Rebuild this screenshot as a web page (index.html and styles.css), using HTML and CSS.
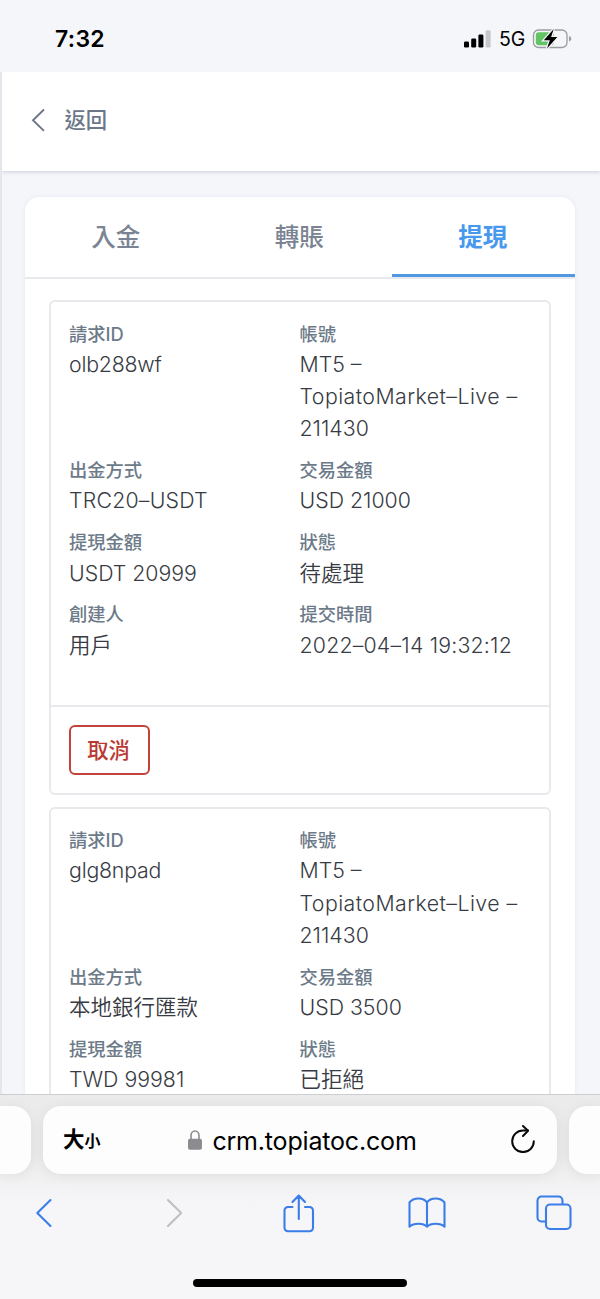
FILE: index.html
```html
<!DOCTYPE html>
<html lang="zh-Hant">
<head>
    <meta charset="UTF-8">
    <meta name="viewport" content="width=device-width, initial-scale=1.0">
    <title>提現</title>
    <link rel="stylesheet" href="styles.css">
</head>
<body>
    <div class="statusbar">
        <div class="time">7:32</div>
        <div class="status-icons">
            <svg class="signal" width="27" height="18" viewBox="0 0 27 18">
                <rect x="0" y="11.5" width="5" height="6" rx="1.3"/>
                <rect x="7.2" y="8.5" width="5" height="9" rx="1.3"/>
                <rect x="14.4" y="4.5" width="5" height="13" rx="1.3"/>
                <rect x="21.6" y="0.3" width="5" height="17.2" rx="1.3" fill="#c6c7ca"/>
            </svg>
            <span class="network">5G</span>
            <svg class="battery" width="40" height="22" viewBox="0 0 40 22">
                <rect x="1.5" y="2" width="33.5" height="17.5" rx="5" fill="none" stroke="#9b9c9f" stroke-width="1.3"/>
                <rect x="3.8" y="4.3" width="18" height="13" rx="3" fill="#63c466"/>
                <path d="M37 8v5.500c1.600-.6 2.300-1.600 2.300-2.700s-.7-2.200-2.300-2.800z" fill="#9b9c9f"/>
                <path d="M21.700 1L11.800 12.300h6L15 20.500 25.300 9h-6.200z" stroke="#f5f6fa" stroke-width="2.500" paint-order="stroke"/>
            </svg>
        </div>
    </div>

    <div class="page">
        <header class="header">
            <svg width="14" height="24" viewBox="0 0 14 24" fill="none" stroke="#6c7789" stroke-width="1.9">
                <path d="M13 1.500L2 12.200 13 22.900"/>
            </svg>
            <span>返回</span>
        </header>

        <main class="card">
            <nav class="tabs">
                <div class="tab">入金</div>
                <div class="tab">轉賬</div>
                <div class="tab active">提現</div>
            </nav>

            <div class="records">
                <section class="record">
                    <div class="fields">
                        <div class="field">
                            <div class="label">請求ID</div>
                            <div class="value id">olb288wf</div>
                        </div>
                        <div class="field">
                            <div class="label">帳號</div>
                            <div class="value">MT5 –<br><span class="server">TopiatoMarket–Live –</span><br>211430</div>
                        </div>
                        <div class="field">
                            <div class="label">出金方式</div>
                            <div class="value wide">TRC20–USDT</div>
                        </div>
                        <div class="field">
                            <div class="label">交易金額</div>
                            <div class="value">USD 21000</div>
                        </div>
                        <div class="field">
                            <div class="label">提現金額</div>
                            <div class="value">USDT 20999</div>
                        </div>
                        <div class="field">
                            <div class="label">狀態</div>
                            <div class="value zh">待處理</div>
                        </div>
                        <div class="field">
                            <div class="label">創建人</div>
                            <div class="value zh">用戶</div>
                        </div>
                        <div class="field">
                            <div class="label">提交時間</div>
                            <div class="value wide">2022–04–14 19:32:12</div>
                        </div>
                    </div>
                    <div class="actions">
                        <button class="cancel">取消</button>
                    </div>
                </section>

                <section class="record">
                    <div class="fields">
                        <div class="field">
                            <div class="label">請求ID</div>
                            <div class="value id">glg8npad</div>
                        </div>
                        <div class="field">
                            <div class="label">帳號</div>
                            <div class="value">MT5 –<br><span class="server">TopiatoMarket–Live –</span><br>211430</div>
                        </div>
                        <div class="field">
                            <div class="label">出金方式</div>
                            <div class="value zh">本地銀行匯款</div>
                        </div>
                        <div class="field">
                            <div class="label">交易金額</div>
                            <div class="value">USD 3500</div>
                        </div>
                        <div class="field">
                            <div class="label">提現金額</div>
                            <div class="value">TWD 99981</div>
                        </div>
                        <div class="field">
                            <div class="label">狀態</div>
                            <div class="value zh">已拒絕</div>
                        </div>
                    </div>
                </section>
            </div>
        </main>
    </div>

    <footer class="browser">
        <div class="address-row">
            <div class="side-tab left"></div>
            <div class="address">
                <div class="text-size"><span class="big">大</span><span class="small">小</span></div>
                <div class="url">
                    <svg width="14" height="20" viewBox="0 0 14 20">
                        <path d="M3 10V5.500a4 4.500 0 0 1 8 0V10" fill="none" stroke="#8b8b90" stroke-width="1.600"/>
                        <rect x="0" y="8.800" width="14" height="11" rx="2" fill="#8b8b90"/>
                    </svg>
                    <span>crm.topiatoc.com</span>
                </div>
                <svg class="reload" width="24" height="28" viewBox="0 0 24 28" fill="none" stroke="#0a0a0a" stroke-width="2" stroke-linecap="round" stroke-linejoin="round">
                    <path d="M22.800 16.300A10.800 10.800 0 1 1 12 5.500h5"/>
                    <path d="M12 1L17 5.700 12 11"/>
                </svg>
            </div>
            <div class="side-tab right"></div>
        </div>
        <div class="toolbar">
            <svg width="38" height="30" viewBox="0 0 18 30">
                <path d="M15.500 2L2.300 15l13.200 13"/>
            </svg>
            <svg class="disabled" width="38" height="30" viewBox="0 0 18 30">
                <path d="M2 2l13.200 13L2 28"/>
            </svg>
            <svg width="38" height="40" viewBox="0 0 32 40">
                <path d="M9.500 14H5a3.500 3.500 0 0 0-3.500 3.500v17.300A3.500 3.500 0 0 0 5 38.300h21.500a3.500 3.500 0 0 0 3.500-3.500V17.500a3.500 3.500 0 0 0-3.500-3.500H22M15.800 26V3M9.500 9l6.300-6.500L22 9"/>
            </svg>
            <svg width="38" height="32" viewBox="0 0 38 32">
                <path d="M19 5.500C15.500.2 5.500.2 1.500 5.500v24.200c4-4 14-4 17.500 0 3.500-4 13.500-4 17.500 0V5.500C32.500.2 22.500.2 19 5.500zM19 5.500v24.200"/>
            </svg>
            <svg width="38" height="36" viewBox="0 0 36 36">
                <rect x="10" y="9.500" width="24.500" height="24.500" rx="4"/>
                <path d="M9.500 26.500H5.500a4 4 0 0 1-4-4v-17a4 4 0 0 1 4-4h17a4 4 0 0 1 4 4V9"/>
            </svg>
        </div>
        <div class="home-bar"></div>
    </footer>
</body>
</html>
```
FILE: styles.css
```css
* {
    box-sizing: border-box;
}
body {
    margin: 0;
    height: 1299px;
    display: flex;
    flex-direction: column;
    overflow: hidden;
    background: #f5f6fa;
    font-family: Inter, "Noto Sans CJK TC", sans-serif;
}

/* status bar */
.statusbar {
    flex: none;
    height: 72px;
    padding: 5px 28px 0 55px;
    display: flex;
    justify-content: space-between;
    align-items: center;
    color: #000;
}
.time {
    font-size: 23px;
    font-weight: 600;
    letter-spacing: 0.3px;
}
.status-icons {
    display: flex;
    align-items: center;
}
.network {
    width: 25px;
    margin: 0 8px;
    font-size: 19.5px;
    font-weight: 400;
    line-height: 20px;
    white-space: nowrap;
}

/* page */
.page {
    flex: none;
    height: 1022px;
    overflow: hidden;
    border-left: 2px solid #e4e6eb;
}
.header {
    height: 99px;
    padding: 0 29px 3px;
    display: flex;
    align-items: center;
    gap: 19.5px;
    background: #fff;
    box-shadow: 0 1px 4px rgba(60, 70, 100, 0.22);
    color: #6c7789;
    font-size: 21.3px;
    font-weight: 500;
}
.header span {
    margin-top: -3px;
}
.card {
    margin: 26px 25px 0 22.500px;
    min-height: 900px;
    background: #fff;
    border-radius: 14px;
    box-shadow: 0 0 4px rgba(60, 70, 100, 0.08);
}
.tabs {
    height: 82px;
    display: flex;
    border-bottom: 2px solid #e7e9ec;
}
.tab {
    flex: 1;
    height: 80px;
    padding: 0 1px 4px 0;
    display: flex;
    justify-content: center;
    align-items: center;
    font-size: 24.5px;
    font-weight: 500;
    color: #7a8492;
}
.tab.active {
    color: #4799ee;
    font-weight: 700;
    border-bottom: 3px solid #5297e1;
    padding-bottom: 1px;
}
.records {
    padding: 21px 24px;
    display: flex;
    flex-direction: column;
    gap: 12px;
}
.record {
    border: 2px solid #e7e9ec;
    border-radius: 6px;
}
.fields {
    display: grid;
    grid-template-columns: 230.500px 1fr;
    row-gap: 12.6px;
    padding: 18.500px 0 43.500px 18.500px;
}
.label {
    height: 27.4px;
    line-height: 27.4px;
    font-size: 18.3px;
    font-weight: 500;
    color: #6c7a89;
}
.value {
    min-height: 32.2px;
    line-height: 32.2px;
    font-size: 21.3px;
    font-weight: 350;
    color: #383b43;
    white-space: nowrap;
}
.value.id {
    letter-spacing: -0.2px;
}
.value.wide {
    letter-spacing: 0.2px;
}
.server {
    letter-spacing: 0.45px;
}
.value.zh {
    height: 32.2px;
    font-size: 21.5px;
}
.actions {
    padding: 18px;
    border-top: 2px solid #e7e9ec;
}
.cancel {
    display: block;
    width: 81px;
    height: 50px;
    padding: 0 1px 3px 0;
    border: 2px solid #c4423c;
    border-radius: 6px;
    background: #fff;
    color: #b93a32;
    font-family: inherit;
    font-size: 21.3px;
    font-weight: 500;
}

/* browser chrome */
.browser {
    flex: none;
    height: 205px;
    padding-top: 11px;
    border-top: 1px solid #cdced0;
    background: linear-gradient(#ebebec 0, #ececed 60px, #f6f6f8 110px);
    overflow: hidden;
}
.address-row {
    display: flex;
    gap: 12px;
    height: 68px;
}
.side-tab,
.address {
    background: #fdfdfd;
    box-shadow: 0 2px 14px rgba(0, 0, 0, 0.07);
}
.side-tab {
    width: 31px;
}
.side-tab.left {
    border-radius: 0 18px 18px 0;
}
.side-tab.right {
    border-radius: 18px 0 0 18px;
}
.address {
    flex: 1;
    display: flex;
    justify-content: space-between;
    align-items: center;
    padding: 0 22px 0 20px;
    border-radius: 18px;
    color: #000;
}
.text-size {
    width: 40px;
    display: flex;
    align-items: baseline;
    font-weight: 700;
    line-height: 28px;
}
.big {
    font-size: 21.5px;
}
.small {
    font-size: 16px;
}
.url {
    display: flex;
    align-items: center;
    gap: 10px;
    margin-right: 9px;
    padding-top: 2px;
    font-size: 25px;
    letter-spacing: -0.18px;
}
.url svg {
    margin-top: -2px;
}
.reload {
    margin-top: -3px;
}
.toolbar {
    height: 76px;
    padding: 1px 27px 0 25px;
    display: flex;
    justify-content: space-between;
    align-items: center;
}
.toolbar svg {
    fill: none;
    stroke: #3b7de9;
    stroke-width: 2.1;
    stroke-linecap: round;
    stroke-linejoin: round;
}
.toolbar .disabled {
    margin: 0 -3px 0 3px;
    stroke: #bfbfc2;
}
.home-bar {
    width: 214px;
    height: 8px;
    margin: 29px auto 0;
    border-radius: 4px;
    background: #000;
}
```
